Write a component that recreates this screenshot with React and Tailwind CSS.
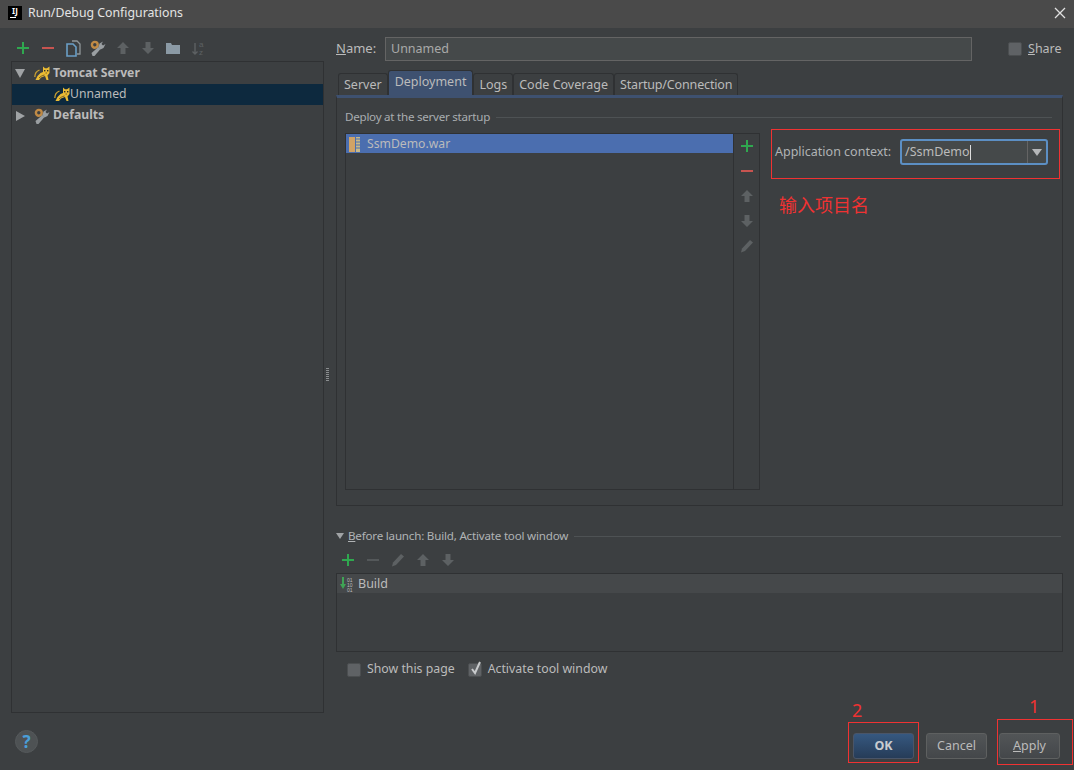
const Plus = ({ c = "#2fa84f" }) => (
  <svg className="shrink-0" width="14" height="14" viewBox="0 0 14 14"><path d="M6 1h2v5h5v2H8v5H6V8H1V6h5z" fill={c} /></svg>
);
const Minus = ({ c = "#c75450" }) => (
  <svg className="shrink-0" width="14" height="14" viewBox="0 0 14 14"><rect x="1" y="6" width="12" height="2" fill={c} /></svg>
);
const Up = ({ c = "#5d6163" }) => (
  <svg className="shrink-0" width="14" height="14" viewBox="0 0 14 14"><path d="M7 1l6 6H9.5v6h-5V7H1z" fill={c} /></svg>
);
const Down = ({ c = "#5d6163" }) => (
  <svg className="shrink-0" width="14" height="14" viewBox="0 0 14 14"><path d="M7 13l6-6H9.5V1h-5v6H1z" fill={c} /></svg>
);
const Pencil = ({ c = "#5d6163" }) => (
  <svg className="shrink-0" width="14" height="14" viewBox="0 0 14 14"><path d="M10 1l3 2.5L5 12l-4 1.5L2 9.5z" fill={c} /></svg>
);
const Wrench = () => (
  <svg className="shrink-0" width="16" height="16" viewBox="0 0 16 16">
    <circle cx="4.8" cy="4.8" r="2.9" fill="none" stroke="#c08a45" strokeWidth="2.4" />
    <path d="M1.5 13l7-6 2 2-6 7H2.5z" fill="#9a9fa2" />
    <path d="M8.5 7l1-3.5L13 1.5 11.5 4l1.5 1.5 2.5-1.5-2 4-3 1.5z" fill="#9a9fa2" />
  </svg>
);
const Cat = () => (
  <svg className="shrink-0" width="16" height="15" viewBox="0 0 16 15">
    <path d="M9 0.5l2 1.7h2L15.5 0.5V7l-2 2.5 1 4.5h-2l-1.5-4-4 1.5L5 14H1.5l2-4 3-3 2.5-1z" fill="#eabb34" />
    <path d="M0.8 11c0-3.5 2-6 4.7-7" stroke="#c9a030" strokeWidth="1.3" fill="none" />
    <path d="M5 12c1.5-1.5 3-2.5 5.5-3" stroke="#7a6224" strokeWidth="1" fill="none" />
    <rect x="10" y="4" width="1.4" height="1.4" fill="#2b2b2b" />
    <rect x="13" y="4" width="1.4" height="1.4" fill="#2b2b2b" />
    <rect x="11.5" y="6.5" width="1.5" height="1" fill="#7a6224" />
  </svg>
);
const Box = ({ checked }) => (
  <span className="relative w-[14px] h-[14px] rounded-[2px] bg-[#5f6265] border border-[#4b4e50] shrink-0">
    {checked && (
      <svg className="absolute -top-[4px] left-0" width="14" height="16" viewBox="0 0 14 16">
        <path d="M3 9l3 4 5-11" stroke="#c8cacc" strokeWidth="2" fill="none" />
      </svg>
    )}
  </span>
);
const Tab = ({ children, active, className = "" }) => (
  <div
    className={
      (active
        ? "h-[25px] -mt-[2px] px-[6px] pb-[1px] flex items-center rounded-t-[3px] border border-b-0 border-[#2f3133] bg-[#3e5170] text-[#bbbbbb] "
        : "h-[22px] px-[5px] pt-[1px] flex items-center rounded-t-[3px] border border-b-0 border-[#2f3133] text-[#bbbbbb] ") + className
    }
  >
    {children}
  </div>
);
const Btn = ({ children, primary }) => (
  <div
    className={
      "w-[61px] h-[26px] rounded-[3px] border flex items-center justify-center " +
      (primary
        ? "border-[#4a5568] bg-gradient-to-b from-[#365880] to-[#263c58] text-[#c8ccd0] font-bold"
        : "border-[#5e6060] bg-gradient-to-b from-[#525557] to-[#44474a] text-[#bbbbbb]")
    }
  >
    {children}
  </div>
);
const Annot = ({ className }) => <div className={"absolute border border-[#f03232] " + className} />;

export default function App() {
  return (
    <div
      className="relative w-[1074px] h-[770px] bg-[#3c3f41] text-[#bbbbbb] text-[12.5px] overflow-hidden flex flex-col"
      style={{ fontFamily: '"Noto Sans", "Noto Sans CJK SC", sans-serif' }}
    >
      <div className="h-[28px] shrink-0 bg-[#4a4a4a] flex items-center pl-[8px] pr-[8px] pb-[2px] text-[#e4e4e4] text-[12.3px]">
        <div className="relative w-[14px] h-[14px] bg-black text-white text-[8px] leading-[10px] font-bold text-center mr-[6px]">
          IJ
          <div className="absolute left-[2px] bottom-[2px] w-[6px] h-px bg-white" />
        </div>
        <span>Run/Debug Configurations</span>
        <svg className="ml-auto" width="12" height="12" viewBox="0 0 12 12">
          <path d="M1 1l10 10M11 1L1 11" stroke="#e0e0e0" strokeWidth="1.3" />
        </svg>
      </div>

      <div className="flex flex-1 min-h-0">
        <div className="w-[336px] shrink-0 pl-[11px] pt-[10px] pr-[12px] flex flex-col">
          <div className="h-[23px] flex items-center gap-[11px] pl-[5px] pb-[3px]">
            <Plus />
            <Minus />
            <div className="w-[14px] flex justify-center">
              <svg className="shrink-0" width="15" height="17" viewBox="0 0 15 17">
                <path d="M6 1h5l3 3v10h-3" fill="none" stroke="#8f9699" strokeWidth="1.3" />
                <path d="M1 4h6l3 3v9H1z" fill="#3c3f41" stroke="#6a9fc6" strokeWidth="1.6" />
              </svg>
            </div>
            <div className="w-[14px] flex justify-center">
              <Wrench />
            </div>
            <Up />
            <Down />
            <svg className="shrink-0" width="14" height="14" viewBox="0 0 14 14">
              <path d="M0 2h5l1 2h8v9H0z" fill="#8b9aa5" />
            </svg>
            <div className="w-[14px] flex justify-center">
              <svg className="shrink-0" width="15" height="16" viewBox="0 0 15 16">
                <path d="M4 3v11M1.5 11.5L4 14l2.5-2.5" stroke="#5d6163" strokeWidth="1.4" fill="none" />
                <text x="8" y="7" fontSize="8" fill="#5d6163" fontFamily="Liberation Sans">a</text>
                <text x="8" y="15" fontSize="8" fill="#5d6163" fontFamily="Liberation Sans">z</text>
              </svg>
            </div>
          </div>
          <div className="w-[313px] h-[652px] border border-[#2f3133] pt-[1px] text-[12.2px]">
            <div className="h-[21px] flex items-center font-bold text-[#bbbbbb]">
              <svg className="ml-[3px] mr-[9px] shrink-0" width="10" height="9" viewBox="0 0 10 9">
                <path d="M0 0h10L5 9z" fill="#a0a3a5" />
              </svg>
              <Cat />
              <span className="ml-[3px]">Tomcat Server</span>
            </div>
            <div className="h-[21px] flex items-center bg-[#0d293e] pl-[42px]">
              <Cat />
              <span>Unnamed</span>
            </div>
            <div className="h-[21px] flex items-center font-bold">
              <svg className="ml-[4px] mr-[9px] shrink-0" width="9" height="10" viewBox="0 0 9 10">
                <path d="M0 0l9 5-9 5z" fill="#a0a3a5" />
              </svg>
              <Wrench />
              <span className="ml-[3px]">Defaults</span>
            </div>
          </div>
          <div className="mt-[17px] ml-[4px] w-[23px] h-[23px] rounded-full bg-[#4e5254] border border-[#55595b] flex items-center justify-center text-[#4a9fd8] font-bold text-[17px]">
            ?
          </div>
        </div>

        <div className="w-[727px] shrink-0 pt-[9px] flex flex-col">
          <div className="h-[24px] flex items-center">
            <span className="w-[49px] text-[13px]">
              <u>N</u>ame:
            </span>
            <div className="w-[587px] h-[24px] border border-[#646464] bg-[#45494a] px-[5px] flex items-center text-[#a9a9a9]">
              Unnamed
            </div>
            <span className="w-[36px]" />
            <Box />
            <span className="ml-[6px] whitespace-nowrap">
              <u>S</u>hare
            </span>
          </div>

          <div className="mt-[12px] h-[22px] flex items-end pl-[2px]">
            <Tab>Server</Tab>
            <Tab active>Deployment</Tab>
            <Tab>Logs</Tab>
            <Tab>Code Coverage</Tab>
            <Tab className="tracking-[-0.15px]">Startup/Connection</Tab>
          </div>

          <div className="h-[411px] border border-[#2f3133] border-t-[3px] border-t-[#3e5170] px-[8px] pt-[10px] flex flex-col">
            <div className="h-[18px] flex items-center gap-[6px] text-[#a9adb0] text-[11.6px] tracking-[-0.25px]">
              <span>Deploy at the server startup</span>
              <div className="flex-1 h-px bg-[#4e5254] mr-[2px]" />
            </div>
            <div className="mt-[7px] flex">
              <div className="w-[415px] h-[357px] border border-[#2f3133] flex shrink-0">
                <div className="flex-1">
                  <div className="h-[19px] bg-[#4b6eaf] flex items-center pl-[3px] pt-[1px] text-[#bbbbbb] text-[12.2px]">
                    <svg width="12" height="15" viewBox="0 0 12 15" className="mr-[6px] shrink-0">
                      <rect x="0" y="0" width="6" height="15" fill="#d1a366" />
                      <rect x="7" y="0" width="4" height="15" fill="#c8b98a" />
                      <path d="M7 2h4M7 5h4M7 8h4M7 11h4" stroke="#4b6eaf" strokeWidth="1" />
                    </svg>
                    SsmDemo.war
                  </div>
                </div>
                <div className="w-[26px] border-l border-[#2f3133] flex flex-col items-center pt-[5px] gap-[11px]">
                  <Plus />
                  <Minus />
                  <Up />
                  <Down />
                  <Pencil />
                </div>
              </div>
              <div className="ml-[15px] mt-[6px] flex items-center h-[26px]">
                <span className="w-[125px] text-[#b0b3b5]">Application context:</span>
                <div className="w-[148px] h-[26px] rounded-[3px] border-2 border-[#5c8fc4] bg-[#45494a] flex items-center pl-[3px] relative">
                  <span>/SsmDemo</span>
                  <span className="w-px h-[15px] bg-[#dddddd]" />
                  <div className="ml-auto w-[19px] h-full border-l border-[#646464] flex items-center justify-center">
                    <svg width="10" height="7" viewBox="0 0 10 7">
                      <path d="M0 0h10L5 7z" fill="#b5b7b9" />
                    </svg>
                  </div>
                </div>
              </div>
            </div>
          </div>

          <div className="mt-[22px] h-[16px] flex items-center text-[11.6px] tracking-[-0.2px] text-[#b0b3b5]">
            <svg className="mr-[4px] shrink-0" width="8" height="6" viewBox="0 0 8 6">
              <path d="M0 0h8L4 6z" fill="#a0a3a5" />
            </svg>
            <span>
              <u>B</u>efore launch: Build, Activate tool window
            </span>
            <div className="flex-1 h-px bg-[#4e5254] ml-[6px] mr-[2px]" />
          </div>
          <div className="mt-[5px] h-[24px] flex items-center gap-[11px] pl-[5px] pb-[2px]">
            <Plus />
            <Minus c="#54585a" />
            <Pencil />
            <Up />
            <Down />
          </div>
          <div className="h-[79px] border border-[#2f3133]">
            <div className="h-[19px] bg-[#45484a] flex items-center pl-[2px] pt-[1px]">
              <svg width="18" height="15" viewBox="0 0 18 15" className="mr-[1px] shrink-0">
                <path d="M3 0h2v7h2l-3 5-3-5h2z" fill="#3fa355" />
                <text x="8" y="5" fontSize="5" fill="#bbbbbb" fontFamily="Liberation Sans">01</text>
                <text x="8" y="10" fontSize="5" fill="#bbbbbb" fontFamily="Liberation Sans">10</text>
                <text x="8" y="15" fontSize="5" fill="#bbbbbb" fontFamily="Liberation Sans">01</text>
              </svg>
              Build
            </div>
          </div>
          <div className="mt-[9px] h-[17px] flex items-center pl-[11px] text-[12.3px]">
            <Box />
            <span className="ml-[6px]">Show this page</span>
            <span className="w-[13px]" />
            <Box checked />
            <span className="ml-[6px]">Activate tool window</span>
          </div>
          <div className="mt-[55px] flex justify-end gap-[12px] pr-[3px]">
            <Btn primary>OK</Btn>
            <Btn>Cancel</Btn>
            <Btn>
              <span>
                <u>A</u>pply
              </span>
            </Btn>
          </div>
        </div>
      </div>

      <div className="absolute left-[326px] top-[368px] flex flex-col gap-[1px]">
        {[0, 1, 2, 3, 4, 5, 6].map((i) => (
          <div key={i} className="w-[3px] h-px bg-[#8a8d8f]" />
        ))}
      </div>

      <Annot className="left-[771px] top-[129px] w-[289px] h-[50px]" />
      <Annot className="left-[848px] top-[722px] w-[71px] h-[41px]" />
      <Annot className="left-[997px] top-[719px] w-[76px] h-[46px]" />
      <div className="absolute left-[779px] top-[192px] text-[18px] leading-[26px] text-[#f03232]">输入项目名</div>
      <div className="absolute left-[852px] top-[699px] text-[18px] leading-[22px] text-[#f03232]">2</div>
      <div className="absolute left-[1029px] top-[695px] text-[18px] leading-[22px] text-[#f03232]">1</div>
    </div>
  );
}
